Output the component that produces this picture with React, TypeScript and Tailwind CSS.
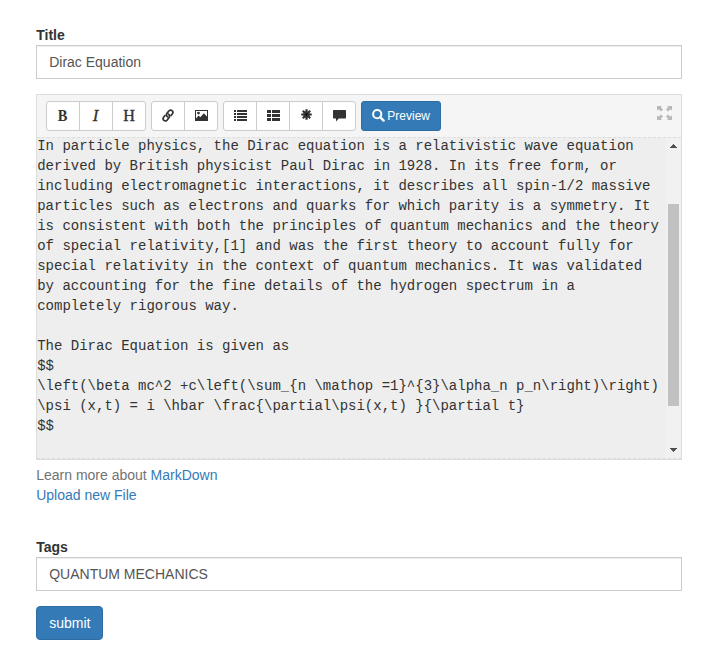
import type { ReactNode } from "react";

const article = `In particle physics, the Dirac equation is a relativistic wave equation
derived by British physicist Paul Dirac in 1928. In its free form, or
including electromagnetic interactions, it describes all spin-1/2 massive
particles such as electrons and quarks for which parity is a symmetry. It
is consistent with both the principles of quantum mechanics and the theory
of special relativity,[1] and was the first theory to account fully for
special relativity in the context of quantum mechanics. It was validated
by accounting for the fine details of the hydrogen spectrum in a
completely rigorous way.

The Dirac Equation is given as
$$
\\left(\\beta mc^2 +c\\left(\\sum_{n \\mathop =1}^{3}\\alpha_n p_n\\right)\\right)
\\psi (x,t) = i \\hbar \\frac{\\partial\\psi(x,t) }{\\partial t}
$$`;

function LinkIcon() {
  return (
    <svg className="-mt-0.5" width="12" height="13" viewBox="0 0 12 13" fill="none" stroke="currentColor" strokeWidth="1.7" strokeLinecap="round">
      <path d="M5.5 7.8C4.2 6.9 4.2 5.4 5 4.4L6.8 2.1C7.6 1 9 .8 10 1.6c1 .8 1.1 2.1.4 3.1L9 6.6" />
      <path d="M6.5 5.2C7.8 6.1 7.8 7.6 7 8.6L5.2 10.9C4.4 12 3 12.2 2 11.4 1 10.6.9 9.3 1.6 8.3L3 6.4" />
    </svg>
  );
}

function PictureIcon() {
  return (
    <svg className="-mt-px" width="13" height="11" viewBox="0 0 13 11" fill="currentColor">
      <path fillRule="evenodd" d="M0 0H13V11H0ZM1 1V8.5L3.6 5.6 5.3 7.2 8.8 3.2 12 6.5V1Z" />
      <circle cx="3.5" cy="3.1" r="1.4" />
    </svg>
  );
}

function ListIcon() {
  return (
    <svg className="-mt-px" width="13" height="11" viewBox="0 0 13 11" fill="currentColor">
      <path d="M0 0h2v2H0zM3 0h10v2H3zM0 3h2v2H0zM3 3h10v2H3zM0 6h2v2H0zM3 6h10v2H3zM0 9h2v2H0zM3 9h10v2H3z" />
    </svg>
  );
}

function ThListIcon() {
  return (
    <svg className="-mt-px" width="13" height="11" viewBox="0 0 13 11" fill="currentColor">
      <path d="M0 0h4v3H0zM5 0h8v3H5zM0 4h4v3H0zM5 4h8v3H5zM0 8h4v3H0zM5 8h8v3H5z" />
    </svg>
  );
}

function AsteriskIcon() {
  return (
    <svg className="-mt-[3px]" width="11" height="11" viewBox="0 0 11 11" stroke="currentColor" strokeWidth="2.2">
      <path d="M5.5 .2v10.6M.2 5.5h10.6M1.8 1.8l7.4 7.4M9.2 1.8 1.8 9.2" />
      <circle cx="5.5" cy="5.5" r="2" />
    </svg>
  );
}

function CommentIcon() {
  return (
    <svg width="13" height="12" viewBox="0 0 13 12" fill="currentColor">
      <path d="M.7 0h11.6a.7.7 0 0 1 .7.7v7.1a.7.7 0 0 1-.7.7H5.8L3 11.5v-3H.7a.7.7 0 0 1-.7-.7V.7A.7.7 0 0 1 .7 0z" />
    </svg>
  );
}

function SearchIcon() {
  return (
    <svg className="-mt-0.5" width="13" height="13" viewBox="0 0 13 13" fill="none" stroke="currentColor" strokeWidth="2">
      <circle cx="5.2" cy="5.2" r="4.1" />
      <path d="m8.2 8.2 3.4 3.4" strokeWidth="2.4" strokeLinecap="round" />
    </svg>
  );
}

function FullscreenIcon() {
  return (
    <svg width="15" height="14" viewBox="0 0 15 14" fill="#b8b8b8">
      <path d="M0 0h5L3.7 1.3 6 3.6 4 5.6 1.5 3.2 0 4.7zM15 0v4.7l-1.5-1.5L11 5.6 9 3.6l2.3-2.3L10 0zM0 14V9.3l1.5 1.5L4 8.4l2 2-2.3 2.3L5 14zM15 14h-5l1.3-1.3L9 10.4l2-2 2.5 2.4L15 9.3z" />
    </svg>
  );
}

function Group({ items }: { items: ReactNode[] }) {
  return (
    <div className="flex h-[30px] divide-x divide-[#ccc] rounded-[3px] border border-[#ccc] bg-white text-[#333]">
      {items.map((item, i) => (
        <button key={i} className="flex w-[33px] items-center justify-center last:w-8">
          {item}
        </button>
      ))}
    </div>
  );
}

function Field({ label, value }: { label: string; value: string }) {
  return (
    <div>
      <label className="block font-bold text-[#333]">{label}</label>
      <div className="h-[34px] border border-[#ccc] px-3 py-1.5 text-[#555] shadow-[inset_0_1px_1px_rgba(0,0,0,0.075)]">
        {value}
      </div>
    </div>
  );
}

const serif = "-mt-px inline-block font-['Liberation_Serif',serif] text-[17px] leading-5";

export default function App() {
  return (
    <main className="h-[645px] overflow-hidden bg-white pt-[25px] pr-[25px] pl-[36.2px] font-['Liberation_Sans',Arial,sans-serif] text-sm leading-5 text-[#333]">
      <Field label="Title" value="Dirac Equation" />

      <section className="mt-[15px] h-[366px] border border-[#ddd] bg-[#eee]">
        <header className="flex h-[42px] items-start justify-between bg-[#f5f5f5] pt-1.5 pr-[9px] pl-[9px]">
          <div className="flex gap-[5px]">
            <Group
              items={[
                <span className={serif + " mr-px scale-x-85 font-bold"}>B</span>,
                <span className={serif + " mr-px [-webkit-text-stroke:0.3px_#333] italic"}>I</span>,
                <span className={serif + " scale-x-95 [-webkit-text-stroke:0.4px_#333]"}>H</span>,
              ]}
            />
            <Group items={[<LinkIcon />, <PictureIcon />]} />
            <Group items={[<ListIcon />, <ThListIcon />, <AsteriskIcon />, <CommentIcon />]} />
            <button className="flex h-[30px] w-20 items-center justify-center gap-0.5 rounded-[3px] border border-[#2e6da4] bg-[#337ab7] text-xs text-white">
              <SearchIcon />
              Preview
            </button>
          </div>
          <div className="pt-[5px]">
            <FullscreenIcon />
          </div>
        </header>
        <div className="flex h-[322px] overflow-hidden border-y border-dashed border-[#ddd]">
          <pre className="-mt-[2px] flex-1 font-['Liberation_Mono',monospace] text-sm leading-5">{article}</pre>
          <div className="flex w-[15px] flex-col items-center bg-[#f1f1f1] pt-1.5">
            <svg width="7" height="4" viewBox="0 0 7 4" fill="#505050">
              <path d="M3 0h1v1h1v1h1v1h1v1H0V3h1V2h1V1h1z" />
            </svg>
            <div className="mt-14 h-[202px] w-[11px] bg-[#c1c1c1]" />
            <svg className="mt-[42px]" width="7" height="4" viewBox="0 0 7 4" fill="#505050">
              <path d="M0 0h7v1H6v1H5v1H4v1H3V3H2V2H1V1H0z" />
            </svg>
          </div>
        </div>
      </section>

      <div className="mt-[5px] text-[#737373]">
        Learn more about <a className="text-[#337ab7]">MarkDown</a>
      </div>
      <a className="mb-8 block text-[#337ab7]">Upload new File</a>

      <Field label="Tags" value="QUANTUM MECHANICS" />
      <button className="mt-[15px] h-[34px] rounded border border-[#2e6da4] bg-[#337ab7] px-3 text-white">submit</button>
    </main>
  );
}
